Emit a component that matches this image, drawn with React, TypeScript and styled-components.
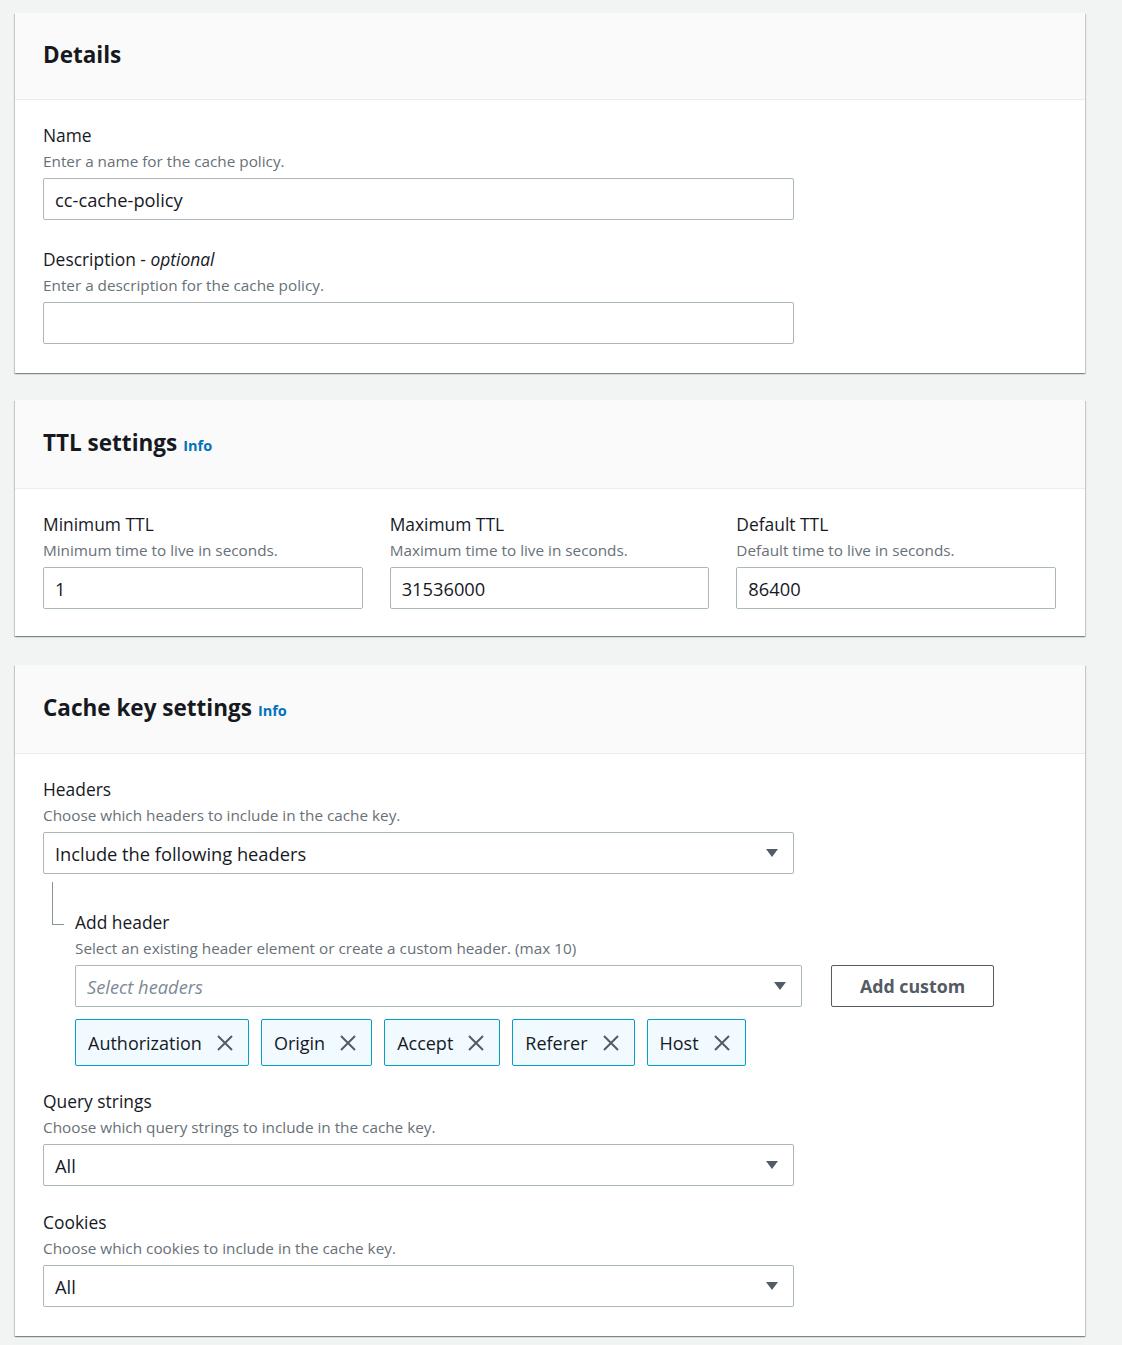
import React from "react";
import styled, { createGlobalStyle } from "styled-components";

const GlobalStyle = createGlobalStyle`
  html, body {
    margin: 0;
    padding: 0;
    background: #f2f3f3;
    font-family: "Open Sans", "Noto Sans", Arial, sans-serif;
    color: #16191f;
  }
  * { box-sizing: border-box; }
`;

const Page = styled.div`
  padding: 13px 37px 20px 15px;
  display: flex;
  flex-direction: column;
`;

const Card = styled.section<{ $mt?: number }>`
  margin-top: ${(p) => p.$mt ?? 0}px;
  background: #fff;
  box-shadow: 0 1px 1px 0 rgba(0, 28, 36, 0.3), 1px 1px 1px 0 rgba(0, 28, 36, 0.15),
    -1px 1px 1px 0 rgba(0, 28, 36, 0.15);
`;

const CardHeader = styled.header<{ $h: number }>`
  height: ${(p) => p.$h}px;
  background: #fafafa;
  border-bottom: 1px solid #eaeded;
  padding: 0 28px 4px;
  display: flex;
  align-items: center;
`;

const Title = styled.h2`
  margin: 0;
  font-size: 22.5px;
  font-weight: 700;
  color: #16191f;
  display: flex;
  align-items: baseline;
  gap: 6px;
`;

const Info = styled.a`
  font-size: 14.5px;
  font-weight: 700;
  color: #0073bb;
  text-decoration: none;
`;

const CardBody = styled.div<{ $pb?: number }>`
  padding: 24px 29px ${(p) => p.$pb ?? 28}px 28px;
  display: flex;
  flex-direction: column;
`;

const Field = styled.div<{ $mt?: number }>`
  display: flex;
  flex-direction: column;
  margin-top: ${(p) => p.$mt ?? 0}px;
`;

const Label = styled.div`
  font-size: 17.4px;
  line-height: 22px;
  color: #16191f;
  em {
    font-style: italic;
  }
`;

const Desc = styled.div`
  font-size: 15.3px;
  line-height: 21px;
  margin-top: 5px;
  color: #687078;
`;

const Input = styled.div<{ $w?: number; $placeholder?: boolean }>`
  margin-top: 6px;
  width: ${(p) => (p.$w ? `${p.$w}px` : "100%")};
  height: 42px;
  border: 1px solid #aab7b8;
  border-radius: 2px;
  background: #fff;
  padding: 0 14px 0 11px;
  display: flex;
  align-items: center;
  font-size: 18.3px;
  color: ${(p) => (p.$placeholder ? "#7d8998" : "#16191f")};
  font-style: ${(p) => (p.$placeholder ? "italic" : "normal")};
`;

const SelectText = styled.span`
  flex: 1;
`;

const TtlGrid = styled.div`
  display: grid;
  grid-template-columns: repeat(3, 1fr);
  column-gap: 27px;
`;

const SubTree = styled.div`
  display: flex;
  margin-top: 8px;
`;

const Connector = styled.div`
  margin-left: 9px;
  width: 12px;
  height: 43px;
  border-left: 1px solid #879596;
  border-bottom: 1px solid #879596;
  flex-shrink: 0;
`;

const SubContent = styled.div`
  margin-left: 11px;
  padding-top: 29px;
  display: flex;
  flex-direction: column;
  flex: 1;
`;

const SelectRow = styled.div`
  display: flex;
  align-items: flex-end;
  gap: 29px;
`;

const Button = styled.button`
  margin-top: 6px;
  width: 163px;
  height: 42px;
  border: 1px solid #545b64;
  border-radius: 2px;
  background: #fff;
  color: #545b64;
  font-family: inherit;
  font-size: 17.8px;
  font-weight: 700;
  cursor: pointer;
`;

const Tokens = styled.div`
  display: flex;
  gap: 12px;
  margin-top: 12px;
`;

const Token = styled.div`
  height: 47px;
  border: 1px solid #00a1c9;
  border-radius: 2px;
  background: #f1faff;
  padding: 0 14px 0 12px;
  display: flex;
  align-items: center;
  gap: 14px;
  font-size: 18px;
  color: #16191f;
`;

const Caret = () => (
  <svg width="14" height="10" viewBox="0 0 14 10">
    <path d="M1 1 L13 1 L7 9 Z" fill="#545b64" />
  </svg>
);

const Close = () => (
  <svg width="18" height="18" viewBox="0 0 18 18">
    <path d="M2 2 L16 16 M16 2 L2 16" stroke="#545b64" strokeWidth="2" fill="none" />
  </svg>
);

const tokens = ["Authorization", "Origin", "Accept", "Referer", "Host"];

export default function App() {
  return (
    <>
      <GlobalStyle />
      <Page>
        <Card>
          <CardHeader $h={87}>
            <Title>Details</Title>
          </CardHeader>
          <CardBody $pb={29}>
            <Field>
              <Label>Name</Label>
              <Desc>Enter a name for the cache policy.</Desc>
              <Input $w={751}>cc-cache-policy</Input>
            </Field>
            <Field $mt={28}>
              <Label>
                Description - <em>optional</em>
              </Label>
              <Desc>Enter a description for the cache policy.</Desc>
              <Input $w={751} />
            </Field>
          </CardBody>
        </Card>

        <Card $mt={27}>
          <CardHeader $h={89}>
            <Title>
              TTL settings <Info href="#">Info</Info>
            </Title>
          </CardHeader>
          <CardBody $pb={27}>
            <TtlGrid>
              <Field>
                <Label>Minimum TTL</Label>
                <Desc>Minimum time to live in seconds.</Desc>
                <Input>1</Input>
              </Field>
              <Field>
                <Label>Maximum TTL</Label>
                <Desc>Maximum time to live in seconds.</Desc>
                <Input>31536000</Input>
              </Field>
              <Field>
                <Label>Default TTL</Label>
                <Desc>Default time to live in seconds.</Desc>
                <Input>86400</Input>
              </Field>
            </TtlGrid>
          </CardBody>
        </Card>

        <Card $mt={29}>
          <CardHeader $h={89}>
            <Title>
              Cache key settings <Info href="#">Info</Info>
            </Title>
          </CardHeader>
          <CardBody $pb={29}>
            <Field>
              <Label>Headers</Label>
              <Desc>Choose which headers to include in the cache key.</Desc>
              <Input $w={751}>
                <SelectText>Include the following headers</SelectText>
                <Caret />
              </Input>
            </Field>
            <SubTree>
              <Connector />
              <SubContent>
                <Label>Add header</Label>
                <Desc>Select an existing header element or create a custom header. (max 10)</Desc>
                <SelectRow>
                  <Input $w={727} $placeholder>
                    <SelectText>Select headers</SelectText>
                    <Caret />
                  </Input>
                  <Button>Add custom</Button>
                </SelectRow>
                <Tokens>
                  {tokens.map((t) => (
                    <Token key={t}>
                      <span>{t}</span>
                      <Close />
                    </Token>
                  ))}
                </Tokens>
              </SubContent>
            </SubTree>
            <Field $mt={24}>
              <Label>Query strings</Label>
              <Desc>Choose which query strings to include in the cache key.</Desc>
              <Input $w={751}>
                <SelectText>All</SelectText>
                <Caret />
              </Input>
            </Field>
            <Field $mt={25}>
              <Label>Cookies</Label>
              <Desc>Choose which cookies to include in the cache key.</Desc>
              <Input $w={751}>
                <SelectText>All</SelectText>
                <Caret />
              </Input>
            </Field>
          </CardBody>
        </Card>
      </Page>
    </>
  );
}
